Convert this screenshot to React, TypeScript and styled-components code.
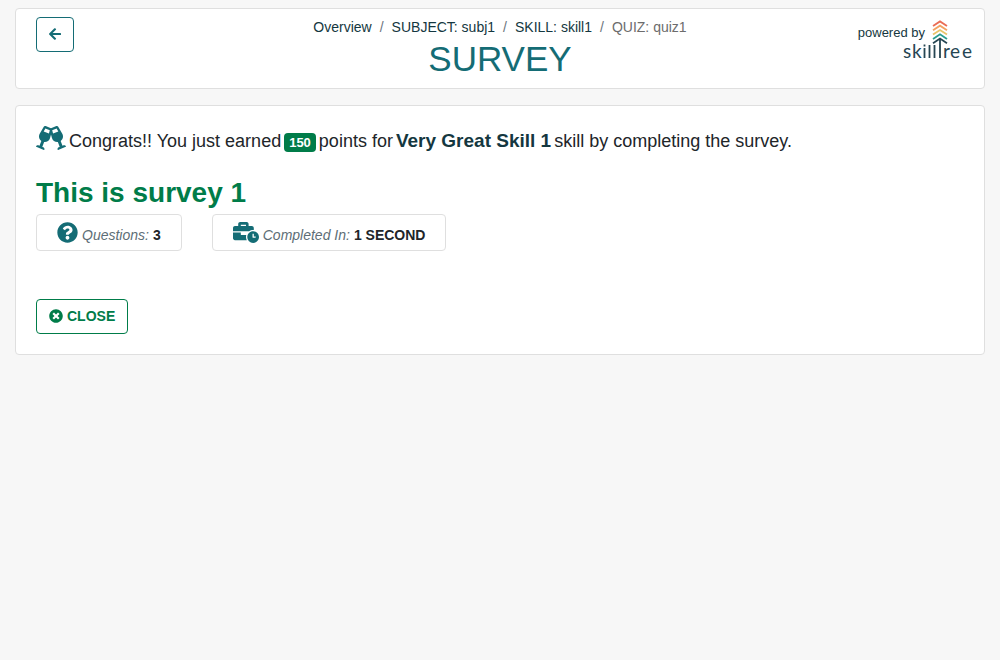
import React from "react";
import styled, { createGlobalStyle } from "styled-components";
import { FaArrowLeft, FaTimesCircle, FaGlassCheers, FaQuestionCircle, FaBusinessTime } from "react-icons/fa";

const Global = createGlobalStyle`
  *, *::before, *::after { box-sizing: border-box; }
  body {
    margin: 0;
    background: #f7f7f7;
    color: #212529;
    font-family: "Liberation Sans", Arial, sans-serif;
    font-size: 14px;
    line-height: 21px;
  }
`;

const Page = styled.div`
  display: flex;
  flex-direction: column;
  gap: 16px;
  padding: 8px 15px;
`;

const Card = styled.div`
  background: #fff;
  border: 1px solid #dfdfdf;
  border-radius: 4px;
`;

const HeaderCard = styled(Card).attrs({ as: "header" })`
  display: grid;
  grid-template-columns: 1fr auto 1fr;
  align-items: start;
  padding: 8px 12px 8px 20px;
`;

const HeaderCenter = styled.div`
  text-align: center;
  margin-right: 8px;
`;

const Button = styled.button<{ $color: string; $iconWidth: number }>`
  display: inline-flex;
  align-items: center;
  gap: 4px;
  height: 35px;
  padding: 0 12px;
  background: #fff;
  border: 1px solid ${(p) => p.$color};
  border-radius: 4px;
  color: ${(p) => p.$color};
  font: bold 14px/21px "Liberation Sans", Arial, sans-serif;
  cursor: pointer;
  justify-self: start;
  svg {
    width: ${(p) => p.$iconWidth}px;
    height: 14px;
    margin-bottom: 2px;
  }
`;

const Crumbs = styled.ol`
  display: flex;
  justify-content: center;
  list-style: none;
  margin: 0;
  padding: 0;
`;

const Crumb = styled.li`
  color: #6c6c6c;
  & + &::before {
    content: "/";
    padding: 0 8px;
    color: #6c757d;
  }
`;

const CrumbLink = styled.a`
  color: #143740;
  text-decoration: none;
`;

const PageTitle = styled.h1`
  margin: 0;
  color: #146c75;
  font-size: 35px;
  font-weight: 400;
  line-height: 42px;
`;

const Brand = styled.div`
  display: flex;
  justify-content: flex-end;
  color: #143740;
  font-size: 13px;
  padding-top: 3px;
`;

const BrandText = styled.span`
  padding-top: 2px;
  margin-right: -23px;
`;

const Result = styled(Card).attrs({ as: "main" })`
  padding: 20px;
`;

const Congrats = styled.p`
  display: flex;
  align-items: baseline;
  flex-wrap: wrap;
  gap: 3px;
  margin: 0;
  font-size: 18px;
  line-height: 30px;
`;

const Badge = styled.span`
  padding: 2px 5px;
  border-radius: 4px;
  background: #007c49;
  color: #fff;
  font-size: 13px;
  font-weight: 700;
  line-height: 15px;
`;

const SkillName = styled.strong`
  color: #143740;
  font-size: 19px;
`;

const IconWrap = styled.span<{ $width: number; $height: number }>`
  align-self: flex-start;
  color: #146c75;
  svg {
    display: block;
    width: ${(p) => p.$width}px;
    height: ${(p) => p.$height}px;
  }
`;

const SurveyName = styled.h2`
  margin: 20px 0 4px;
  color: #007c49;
  font-size: 28px;
  line-height: 34px;
`;

const Stats = styled.div`
  display: flex;
  flex-wrap: wrap;
  gap: 30px;
  margin-bottom: 48px;
`;

const Stat = styled(Card)`
  display: flex;
  align-items: baseline;
  gap: 4px;
  padding: 7px 20px 2px;
  line-height: 26px;
`;

const StatLabel = styled.em`
  color: #5d6e76;
`;

const Logo = () => (
  <svg width="70" height="42" viewBox="0 0 70 42" role="img" aria-label="skilltree">
    <g fill="none" strokeWidth="1.8">
      <path d="M31 6l7-4.600 7 4.600" stroke="#ea6d55" />
      <path d="M31 10.300l7-4.600 7 4.600" stroke="#f3a261" />
      <path d="M31 14.600l7-4.600 7 4.600" stroke="#e9c46a" />
      <path d="M31 18.900l7-4.600 7 4.600" stroke="#2a9d8f" />
      <path d="M31 23.200l7-4.600 7 4.600M38 19v19" stroke="#264653" />
      <path d="M22.500 28v10M22.500 24.500v2M27.500 25v13M32.500 25v13" stroke="#264653" />
    </g>
    <text y="38" fill="#264653" fontFamily="Lato, sans-serif" fontSize="19">
      <tspan x="1">s</tspan>
      <tspan x="10">k</tspan>
      <tspan x="41">r</tspan>
      <tspan x="48">e</tspan>
      <tspan x="60">e</tspan>
    </text>
  </svg>
);

export default function App() {
  return (
    <>
      <Global />
      <Page>
        <HeaderCard>
          <Button $color="#146c75" $iconWidth={12} aria-label="Back"><FaArrowLeft /></Button>
          <HeaderCenter>
            <nav aria-label="Breadcrumb">
              <Crumbs>
                <Crumb><CrumbLink href="#overview">Overview</CrumbLink></Crumb>
                <Crumb><CrumbLink href="#subj1">SUBJECT: subj1</CrumbLink></Crumb>
                <Crumb><CrumbLink href="#skill1">SKILL: skill1</CrumbLink></Crumb>
                <Crumb aria-current="page">QUIZ: quiz1</Crumb>
              </Crumbs>
            </nav>
            <PageTitle>SURVEY</PageTitle>
          </HeaderCenter>
          <Brand>
            <BrandText>powered by</BrandText>
            <Logo />
          </Brand>
        </HeaderCard>
        <Result>
          <Congrats>
            <IconWrap $width={30} $height={24}><FaGlassCheers /></IconWrap>
            <span>Congrats!! You just earned</span>
            <Badge>150</Badge>
            <span>points for</span>
            <SkillName>Very Great Skill 1</SkillName>
            <span>skill by completing the survey.</span>
          </Congrats>
          <SurveyName>This is survey 1</SurveyName>
          <Stats>
            <Stat>
              <IconWrap $width={21} $height={21}><FaQuestionCircle /></IconWrap>
              <StatLabel>Questions:</StatLabel>
              <strong>3</strong>
            </Stat>
            <Stat>
              <IconWrap $width={26} $height={21}><FaBusinessTime /></IconWrap>
              <StatLabel>Completed In:</StatLabel>
              <strong>1 SECOND</strong>
            </Stat>
          </Stats>
          <Button $color="#007c49" $iconWidth={14}><FaTimesCircle /> CLOSE</Button>
        </Result>
      </Page>
    </>
  );
}
